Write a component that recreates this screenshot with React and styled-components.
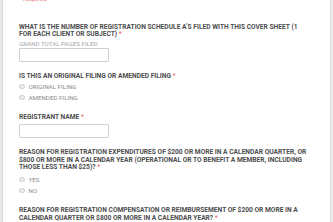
import React from "react";
import styled, { createGlobalStyle } from "styled-components";

const GlobalStyle = createGlobalStyle`
  html, body {
    margin: 0;
    padding: 0;
    background: #e8e8e8;
    overflow: hidden;
  }
  body {
    font-family: Roboto, "Liberation Sans", sans-serif;
  }
`;

const Card = styled.main`
  margin: -5px 2px 0;
  background: #fff;
  border-left: 1px solid #dcdcdc;
  border-right: 1px solid #dcdcdc;
  padding: 0 21px 20px 16px;
  min-height: 260px;
`;

const Required = styled.div`
  color: #e07a7a;
  font-size: 6px;
  line-height: 7px;
  margin-bottom: 21.5px;
`;

const Block = styled.section`
  margin-bottom: ${(p) => p.$gap || 11}px;
`;

const Question = styled.div`
  color: #4d4d4d;
  font-weight: 700;
  font-size: 6.65px;
  line-height: 7.5px;
  text-transform: uppercase;
`;

const Star = styled.span`
  color: #e26a6a;
  font-weight: 400;
`;

const Helper = styled.div`
  color: #a8a8a8;
  font-size: 6.2px;
  line-height: 7px;
  margin-top: 2px;
  text-transform: uppercase;
`;

const Input = styled.input`
  display: block;
  box-sizing: border-box;
  width: 90px;
  height: 14px;
  margin-top: ${(p) => p.$top || 0.5}px;
  border: 1px solid #cfcfcf;
  border-radius: 1px;
  background: #fff;
  padding: 0 3px;
  outline: none;
`;

const Options = styled.div`
  margin-top: ${(p) => p.$top || 1}px;
`;

const Option = styled.label`
  display: flex;
  align-items: center;
  gap: 4px;
  height: 11px;
  color: #8a8a8a;
  font-size: 6.2px;
  text-transform: uppercase;
`;

const Radio = styled.span`
  box-sizing: border-box;
  width: 5.5px;
  height: 5.5px;
  border-radius: 50%;
  border: 1px solid #cfcfcf;
  background: #ececec;
  flex: none;
`;

const RadioGroup = ({ options, top }) => (
  <Options $top={top}>
    {options.map((o) => (
      <Option key={o}>
        <Radio />
        {o}
      </Option>
    ))}
  </Options>
);

const App = () => {
  return (
    <>
      <GlobalStyle />
      <Card>
        <Required>* Required</Required>

        <Block $gap={10.5}>
          <Question>
            What is the number of registration schedule A’s filed with this
            cover sheet (1 for each client or subject) <Star>*</Star>
          </Question>
          <Helper>Grand total pages filed</Helper>
          <Input />
        </Block>

        <Block>
          <Question>
            Is this an original filing or amended filing <Star>*</Star>
          </Question>
          <RadioGroup options={["Original filing", "Amended filing"]} />
        </Block>

        <Block>
          <Question>
            Registrant name <Star>*</Star>
          </Question>
          <Input $top={2.5} />
        </Block>

        <Block>
          <Question>
            Reason for registration expenditures of $200 or more in a calendar
            quarter, or $800 or more in a calendar year (operational or to
            benefit a member, including those less than $25)? <Star>*</Star>
          </Question>
          <RadioGroup options={["Yes", "No"]} top={2.5} />
        </Block>

        <Block>
          <Question>
            Reason for registration compensation or reimbursement of $200 or
            more in a calendar quarter or $800 or more in a calendar year?{" "}
            <Star>*</Star>
          </Question>
        </Block>
      </Card>
    </>
  );
};

export default App;
